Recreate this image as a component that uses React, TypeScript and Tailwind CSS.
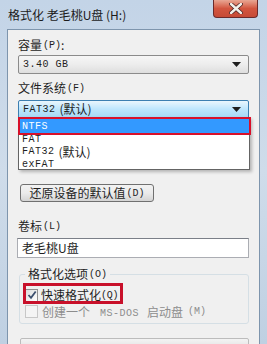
import React from "react";

const cjk = { fontFamily: '"Noto Sans CJK SC", "Microsoft YaHei", sans-serif' };
const mono = { fontFamily: '"Liberation Mono", "Noto Sans CJK SC", monospace' };

// ascii in a SimSun-like mono, chinese a bit larger
const Mono = ({ children }: { children: React.ReactNode }) => (
  <span className="text-[10px] tracking-[0.5px]" style={mono}>
    {children}
  </span>
);

const Hot = ({ k }: { k: string }) => (
  <span className="text-[10px] ml-[1px]" style={mono}>
    ({k})
  </span>
);

const Arrow = () => (
  <svg width="9" height="5" viewBox="0 0 9 5" className="ml-auto mr-[7px]">
    <path d="M0 0 H9 L4.5 5 Z" fill="#1e1e1e" />
  </svg>
);

const CheckBox = ({ checked, disabled }: { checked?: boolean; disabled?: boolean }) => (
  <div
    className={
      "w-[13px] h-[13px] shrink-0 flex items-center justify-center border " +
      (disabled
        ? "border-[#c7c7c7] bg-[#f4f4f4]"
        : "border-[#8f8f8f] bg-gradient-to-br from-[#dcdcdc] to-[#ffffff]")
    }
  >
    {checked && (
      <svg width="10" height="10" viewBox="0 0 10 10">
        <path d="M1.5 5 L4 7.8 L8.7 1.5" stroke="#3c4f6e" strokeWidth="1.8" fill="none" />
      </svg>
    )}
  </div>
);

export default function App() {
  return (
    <div
      className="w-[267px] h-[344px] overflow-hidden flex flex-col bg-gradient-to-b from-[#c3d4e7] via-[#cfdcea] to-[#bfd0e2] text-[#1e1e1e]"
      style={cjk}
    >
      {/* title bar */}
      <div className="h-[29px] flex shrink-0">
        <div className="pl-[8px] pt-[6px] text-[12px] leading-[18px] text-[#1b1b1b]">
          格式化 老毛桃U盘 (H:)
        </div>
        <div className="ml-auto mr-[9px] w-[45px] h-[18px] rounded-b-[4px] border border-t-0 border-[#6b2a2a] bg-gradient-to-b from-[#e8a693] via-[#d2553f] to-[#c64a36] flex items-center justify-center">
          <svg width="14" height="11" viewBox="0 0 14 11">
            <path d="M2 1 L12 10 M12 1 L2 10" stroke="#4a2020" strokeWidth="4" strokeLinecap="round" />
            <path d="M2 1 L12 10 M12 1 L2 10" stroke="#f3f0ea" strokeWidth="2.4" strokeLinecap="round" />
          </svg>
        </div>
      </div>

      {/* body */}
      <div className="flex-1 ml-[7px] mr-[7px] border border-[#7e95ad] bg-[#f0f0f0] flex flex-col pl-[10px] pr-[10px] relative text-[12px]">
        <div className="mt-[7px] h-[16px] shrink-0 flex items-center">
          容量<Hot k="P" />:
        </div>
        <div className="mt-[2px] h-[19px] shrink-0 w-[231px] rounded-[2px] border border-[#8b8b8b] bg-gradient-to-b from-[#f6f6f6] via-[#ededed] to-[#dedede] flex items-center pl-[4px]">
          <Mono>3.40 GB</Mono>
          <Arrow />
        </div>
        <div className="mt-[6px] h-[16px] shrink-0 flex items-center">
          文件系统<Hot k="F" />
        </div>
        <div className="mt-[4px] h-[18px] shrink-0 w-[231px] rounded-t-[2px] border border-[#3c7fb1] bg-gradient-to-b from-[#eaf6fd] via-[#bee6fd] to-[#a7d9f5] flex items-center pl-[4px]">
          <Mono>FAT32</Mono>
          <span className="ml-[4px]">(默认)</span>
          <Arrow />
        </div>

        <div className="mt-[66px] h-[18px] shrink-0 w-[134px] ml-[2px] rounded-[3px] border border-[#707070] bg-gradient-to-b from-[#f2f2f2] via-[#ebebeb] to-[#d4d4d4] flex items-center justify-center">
          还原设备的默认值<Hot k="D" />
        </div>

        <div className="mt-[16px] h-[16px] shrink-0 flex items-center">
          卷标<Hot k="L" />
        </div>
        <div className="mt-[4px] h-[20px] shrink-0 w-[232px] -ml-[1px] border border-[#abadb3] border-t-[#7b7f88] bg-white flex items-center pl-[4px]">
          老毛桃U盘
        </div>

        {/* group */}
        <div className="mt-[16px] w-[230px] h-[50px] shrink-0 ml-[1px] border border-[#d5dfe5] rounded-[3px] relative flex flex-col pl-[5px] pt-[12px]">
          <div className="absolute -top-[9px] left-[5px] px-[3px] bg-[#f0f0f0] h-[16px] flex items-center">
            格式化选项<Hot k="O" />
          </div>
          <div className="h-[16px] flex items-center gap-[3px]">
            <CheckBox checked />
            <span className="flex items-center">
              快速格式化
              <span className="text-[10px] tracking-[-0.3px]" style={mono}>(Q)</span>
            </span>
          </div>
          <div className="h-[17px] flex items-center gap-[4px] text-[#8d8d8d]">
            <CheckBox disabled />
            <span>创建一个</span>
            <span className="ml-[6px]"><Mono>MS-DOS</Mono></span>
            <span className="ml-[4px]">启动盘</span>
            <Hot k="M" />
          </div>
        </div>

        <div className="mt-[14px] h-[12px] shrink-0 w-[229px] ml-[2px] rounded-t-[2px] border border-[#bcbcbc] bg-gradient-to-b from-[#f3f3f3] to-[#e2e2e2]" />

        {/* dropdown list */}
        <div className="absolute left-[10px] top-[87px] w-[232px] h-[53px] bg-white border border-[#646464] shadow-[2px_2px_3px_rgba(0,0,0,0.25)] flex flex-col">
          <div className="h-[14px] bg-[#3399ff] text-white flex items-center pl-[3px] mt-[1px]">
            <Mono>NTFS</Mono>
          </div>
          <div className="h-[12px] flex items-center pl-[3px]">
            <Mono>FAT</Mono>
          </div>
          <div className="h-[13px] flex items-center pl-[3px]">
            <Mono>FAT32</Mono>
            <span className="ml-[4px]">(默认)</span>
          </div>
          <div className="h-[12px] flex items-center pl-[3px]">
            <Mono>exFAT</Mono>
          </div>
        </div>

        {/* red annotation marks */}
        <div className="absolute left-[10px] top-[87px] w-[233px] h-[18px] border-[2px] border-[#d8102a]" />
        <div className="absolute left-[15px] top-[253px] w-[100px] h-[21px] border-[3px] border-[#c8102a]" />
      </div>
    </div>
  );
}
